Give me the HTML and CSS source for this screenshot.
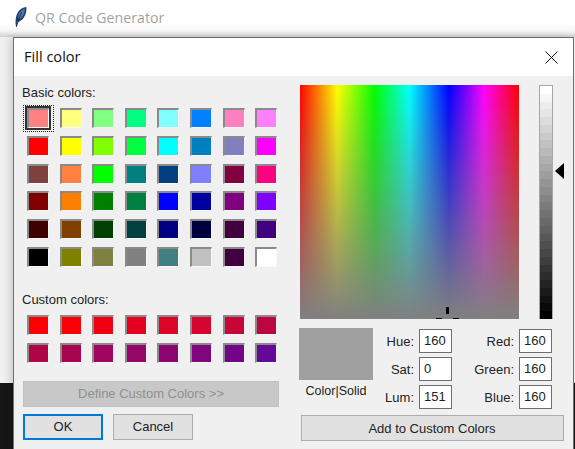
FILE: index.html
```html
<!DOCTYPE html>
<html lang="en">

<head>
    <meta charset="UTF-8">
    <meta name="viewport" content="width=device-width, initial-scale=1.0">
    <link rel="stylesheet" href="styles.css">
    <title>QR Code Generator</title>
</head>

<body>
    <div class="app-title">
        <svg class="feather" width="12" height="20" viewBox="0 0 12 20">
            <path d="M1 19.5 C0 15 0.5 9 3 5 C5 2 8 0.5 11.5 0 C11.5 4 11 8 8.5 11 C7 13 5 14.5 2.5 15 L1.8 19.8 Z" fill="#1f3f66"/>
            <path d="M3.5 7 C5 4 7.5 2.5 10 1.5 C10 5 9 8 6.5 10.5 C5.5 11.5 4.5 12 3.5 12.5 Z" fill="#4a78ad"/>
            <path d="M1.4 19.5 L6.5 5" stroke="#14263f" stroke-width="0.8" fill="none"/>
        </svg>
        <span>QR Code Generator</span>
    </div>

    <div class="dialog">
        <div class="dialog-title">
            <span class="dialog-name">Fill color</span>
            <svg class="close" width="13" height="13" viewBox="0 0 13 13">
                <path d="M0.5 0.5 L12.5 12.5 M12.5 0.5 L0.5 12.5" stroke="#111" stroke-width="1" fill="none"/>
            </svg>
        </div>

        <div class="dialog-body">
            <div class="left">
                <div class="caption">Basic colors:</div>
                <div class="swatches">
                    <div class="swatch selected" style="background:#ff8080"></div>
                    <div class="swatch" style="background:#ffff80"></div>
                    <div class="swatch" style="background:#80ff80"></div>
                    <div class="swatch" style="background:#00ff80"></div>
                    <div class="swatch" style="background:#80ffff"></div>
                    <div class="swatch" style="background:#0080ff"></div>
                    <div class="swatch" style="background:#ff80c0"></div>
                    <div class="swatch" style="background:#ff80ff"></div>

                    <div class="swatch" style="background:#ff0000"></div>
                    <div class="swatch" style="background:#ffff00"></div>
                    <div class="swatch" style="background:#80ff00"></div>
                    <div class="swatch" style="background:#00ff40"></div>
                    <div class="swatch" style="background:#00ffff"></div>
                    <div class="swatch" style="background:#0080c0"></div>
                    <div class="swatch" style="background:#8080c0"></div>
                    <div class="swatch" style="background:#ff00ff"></div>

                    <div class="swatch" style="background:#804040"></div>
                    <div class="swatch" style="background:#ff8040"></div>
                    <div class="swatch" style="background:#00ff00"></div>
                    <div class="swatch" style="background:#008080"></div>
                    <div class="swatch" style="background:#004080"></div>
                    <div class="swatch" style="background:#8080ff"></div>
                    <div class="swatch" style="background:#800040"></div>
                    <div class="swatch" style="background:#ff0080"></div>

                    <div class="swatch" style="background:#800000"></div>
                    <div class="swatch" style="background:#ff8000"></div>
                    <div class="swatch" style="background:#008000"></div>
                    <div class="swatch" style="background:#008040"></div>
                    <div class="swatch" style="background:#0000ff"></div>
                    <div class="swatch" style="background:#0000a0"></div>
                    <div class="swatch" style="background:#800080"></div>
                    <div class="swatch" style="background:#8000ff"></div>

                    <div class="swatch" style="background:#400000"></div>
                    <div class="swatch" style="background:#804000"></div>
                    <div class="swatch" style="background:#004000"></div>
                    <div class="swatch" style="background:#004040"></div>
                    <div class="swatch" style="background:#000080"></div>
                    <div class="swatch" style="background:#000040"></div>
                    <div class="swatch" style="background:#400040"></div>
                    <div class="swatch" style="background:#400080"></div>

                    <div class="swatch" style="background:#000000"></div>
                    <div class="swatch" style="background:#808000"></div>
                    <div class="swatch" style="background:#808040"></div>
                    <div class="swatch" style="background:#808080"></div>
                    <div class="swatch" style="background:#408080"></div>
                    <div class="swatch" style="background:#c0c0c0"></div>
                    <div class="swatch" style="background:#400040"></div>
                    <div class="swatch" style="background:#ffffff"></div>
                </div>

                <div class="caption custom-caption">Custom colors:</div>
                <div class="swatches">
                    <div class="swatch" style="background:#ff0000"></div>
                    <div class="swatch" style="background:#fb0006"></div>
                    <div class="swatch" style="background:#f00010"></div>
                    <div class="swatch" style="background:#e60020"></div>
                    <div class="swatch" style="background:#dd0528"></div>
                    <div class="swatch" style="background:#d50530"></div>
                    <div class="swatch" style="background:#c80538"></div>
                    <div class="swatch" style="background:#bd0540"></div>

                    <div class="swatch" style="background:#b00548"></div>
                    <div class="swatch" style="background:#a80550"></div>
                    <div class="swatch" style="background:#a00560"></div>
                    <div class="swatch" style="background:#960568"></div>
                    <div class="swatch" style="background:#8c0570"></div>
                    <div class="swatch" style="background:#820580"></div>
                    <div class="swatch" style="background:#750588"></div>
                    <div class="swatch" style="background:#650a98"></div>
                </div>

                <button class="btn btn-define" disabled>Define Custom Colors &gt;&gt;</button>
                <div class="btn-row">
                    <button class="btn btn-ok">OK</button>
                    <button class="btn">Cancel</button>
                </div>
            </div>

            <div class="right">
                <div class="picker">
                    <div class="spectrum">
                        <div class="crosshair">
                            <i class="tick tick-top"></i>
                            <i class="tick tick-left"></i>
                            <i class="tick tick-right"></i>
                        </div>
                    </div>
                    <div class="lum-bar"></div>
                    <div class="lum-arrow"></div>
                </div>

                <div class="values">
                    <div class="preview-col">
                        <div class="preview"></div>
                        <div class="preview-label">Color|Solid</div>
                    </div>
                    <div class="fields">
                        <label>Hue:</label><div class="field">160</div>
                        <label>Red:</label><div class="field">160</div>
                        <label>Sat:</label><div class="field">0</div>
                        <label>Green:</label><div class="field">160</div>
                        <label>Lum:</label><div class="field">151</div>
                        <label>Blue:</label><div class="field">160</div>
                    </div>
                </div>

                <button class="btn btn-add">Add to Custom Colors</button>
            </div>
        </div>
    </div>
</body>

</html>
```

FILE: styles.css
```css
html,
body {
    margin: 0;
    height: 100%;
}

body {
    width: 575px;
    height: 449px;
    overflow: hidden;
    font-family: "Liberation Sans", Arial, sans-serif;
    /* window behind the dialog, dark desktop shows at the bottom */
    background: linear-gradient(to bottom, #f0f0f0 383px, #161616 383px);
}

.app-title {
    height: 37px;
    box-sizing: border-box;
    padding: 4px 0 0 0;
    display: flex;
    align-items: flex-start;
    background: linear-gradient(to bottom, #fff 22px, #f6f6f6 31px, #d0d0d0 37px);
    color: #a3a3a3;
    font-family: "Open Sans", sans-serif;
    font-size: 14.2px;
    line-height: 27px;
}

.feather {
    margin: 3px 8px 0 15px;
}

.dialog {
    margin-left: 13px;
    width: 561px;
    height: 412px;
    box-sizing: border-box;
    border: 1px solid #6e6e6e;
    border-bottom: none;
    background: #f0f0f0;
    box-shadow: -4px 0 6px rgba(0, 0, 0, 0.12);
}

.dialog-title {
    height: 38px;
    padding: 0 15px 0 10px;
    display: flex;
    align-items: center;
    justify-content: space-between;
    background: #fff;
    font-family: "Open Sans", sans-serif;
    font-size: 14.6px;
    color: #111;
}

.dialog-name {
    margin-top: -2px;
}

.dialog-body {
    display: flex;
    padding-top: 9px;
}

.left {
    width: 285px;
    padding-left: 8px;
    box-sizing: border-box;
}

.caption {
    font-size: 13px;
    line-height: 16px;
    color: #222;
}

.custom-caption {
    margin-top: 25px;
}

.swatches {
    display: grid;
    grid-template-columns: repeat(8, 22px);
    column-gap: 10.6px;
    row-gap: 7.8px;
    margin: 7px 0 0 5px;
}

.swatch {
    height: 20px;
    box-sizing: border-box;
    border-style: solid;
    border-width: 2px 1px 1px 2px;
    border-color: #8a8a8a #f6f6f6 #f8f8f8 #8a8a8a;
    position: relative;
}

.swatch.selected {
    outline: 2px solid #333;
    outline-offset: 0;
}

.swatch.selected::after {
    content: "";
    position: absolute;
    inset: -5px -6px;
    border: 1px dotted #222;
}

.btn {
    height: 26px;
    box-sizing: border-box;
    border: 1px solid #adadad;
    background: #e1e1e1;
    font-family: "Liberation Sans", Arial, sans-serif;
    font-size: 13px;
    color: #222;
    padding: 0;
}

.btn-define {
    display: block;
    width: 256px;
    margin: 18px 0 0 1px;
    background: #c8c8c8;
    border-color: #c0c0c0;
    color: #8f8f8f;
}

.btn-row {
    display: flex;
    gap: 10px;
    margin: 7px 0 0 1px;
}

.btn-row .btn {
    width: 80px;
}

.btn-ok {
    border: 2px solid #0078d7;
}

.right {
    width: 265px;
    box-sizing: border-box;
}

.picker {
    display: flex;
    align-items: flex-start;
    height: 234px;
    margin-left: 1px;
}

.spectrum {
    width: 219px;
    height: 234px;
    position: relative;
    overflow: hidden;
    background:
        linear-gradient(to bottom, rgba(128, 128, 128, 0), rgb(128, 128, 128)),
        linear-gradient(to right, #f00 0%, #ff0 17%, #0f0 34%, #0ff 50%, #00f 68%, #f0f 84%, #f00 100%);
}

.crosshair {
    position: absolute;
    left: 135px;
    top: 222px;
    width: 24px;
    height: 24px;
}

.tick {
    position: absolute;
    background: #000;
}

.tick-top {
    left: 11px;
    top: 0;
    width: 3px;
    height: 7px;
}

.tick-left {
    left: 1px;
    top: 11px;
    width: 6px;
    height: 2px;
}

.tick-right {
    left: 18px;
    top: 11px;
    width: 6px;
    height: 2px;
}

/* luminance is quantised in the real dialog, 30 steps */
.lum-bar {
    width: 14px;
    height: 234px;
    margin-left: 20px;
    border: 1px solid #a8a8a8;
    border-bottom: none;
    box-sizing: border-box;
    background: linear-gradient(to bottom,
        #ffffff 0 3.33%, #f6f6f6 0 6.67%, #ededed 0 10%, #e5e5e5 0 13.33%, #dcdcdc 0 16.67%,
        #d3d3d3 0 20%, #cacaca 0 23.33%, #c1c1c1 0 26.67%, #b9b9b9 0 30%, #b0b0b0 0 33.33%,
        #a7a7a7 0 36.67%, #9e9e9e 0 40%, #959595 0 43.33%, #8d8d8d 0 46.67%, #848484 0 50%,
        #7b7b7b 0 53.33%, #727272 0 56.67%, #696969 0 60%, #616161 0 63.33%, #585858 0 66.67%,
        #4f4f4f 0 70%, #464646 0 73.33%, #3e3e3e 0 76.67%, #353535 0 80%, #2c2c2c 0 83.33%,
        #232323 0 86.67%, #1a1a1a 0 90%, #121212 0 93.33%, #090909 0 96.67%, #000000 0 100%);
}

.lum-arrow {
    width: 0;
    height: 0;
    margin: 78px 0 0 2px;
    border-style: solid;
    border-width: 8.5px 9px 8.5px 0;
    border-color: transparent #000 transparent transparent;
}

.values {
    display: flex;
    margin-top: 9px;
    height: 85px;
}

.preview-col {
    width: 74px;
}

.preview {
    height: 52px;
    background: #a0a0a0;
}

.preview-label {
    margin-top: 3px;
    font-size: 12.5px;
    line-height: 16px;
    color: #222;
    text-align: center;
}

.fields {
    display: grid;
    grid-template-columns: 46px 33px 67px 33px;
    grid-auto-rows: 24px;
    row-gap: 4px;
    align-items: center;
    margin-top: 1px;
    font-size: 13px;
    color: #222;
}

.fields label {
    text-align: right;
    padding-right: 5px;
}

.field {
    height: 24px;
    box-sizing: border-box;
    border: 1px solid #6e6e6e;
    background: #fff;
    line-height: 22px;
    padding-left: 4px;
}

.btn-add {
    display: block;
    width: 263px;
    margin: 2px 0 0 1.5px;
}
```
